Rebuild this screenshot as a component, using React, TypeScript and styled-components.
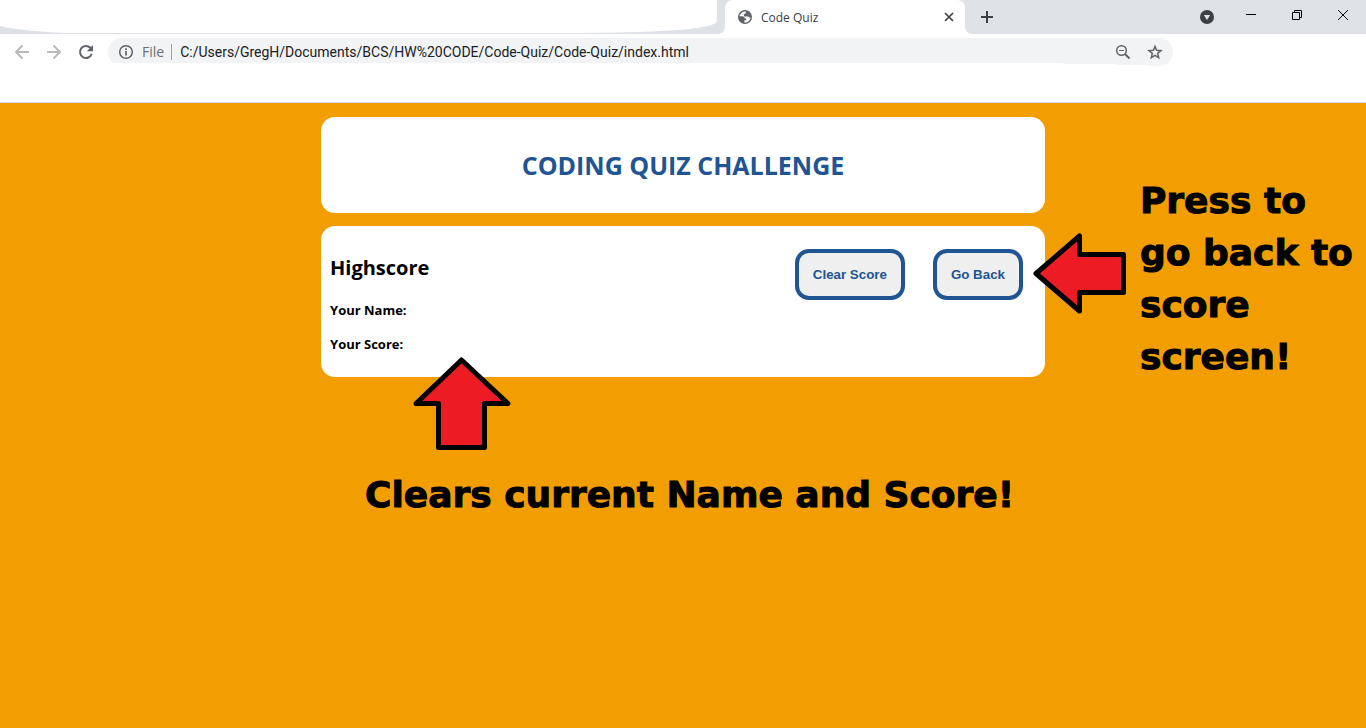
import React from "react";
import styled, { createGlobalStyle } from "styled-components";

const ui = `"Open Sans", "Noto Sans", sans-serif`;
const blue = "#205493";

const GlobalStyle = createGlobalStyle`
  *, *::before, *::after { box-sizing: border-box; }
  body { margin: 0; background: #f39e00; font-family: ${ui}; }
`;

const Page = styled.div`
  min-height: 100vh;
  display: flex;
  flex-direction: column;
  overflow-x: hidden;
`;

const Browser = styled.header`
  height: 103px;
  background: #fff;
  border-bottom: 1px solid #d9dadd;
`;

const TabStrip = styled.div`
  display: flex;
  height: 34px;
  background: #dee1e6;
`;

const BlankTabs = styled.div`
  flex: 0 1 725px;
  padding-right: 8px;
  svg { display: block; width: 100%; height: 34px; }
`;

const Tab = styled.div`
  position: relative;
  display: flex;
  align-items: center;
  width: 240px;
  height: 34px;
  padding: 0 10px 0 12px;
  background: #fff;
  border-radius: 8px 8px 0 0;
  color: #3c4043;
  font-size: 12px;
  &::before, &::after {
    content: "";
    position: absolute;
    bottom: 0;
    width: 8px;
    height: 8px;
  }
  &::before {
    right: 100%;
    background: radial-gradient(circle at 0 0, transparent 8px, #fff 8px);
  }
  &::after {
    left: 100%;
    background: radial-gradient(circle at 100% 0, transparent 8px, #fff 8px);
  }
`;

const TabTitle = styled.span`
  flex: 1;
  padding-left: 8px;
`;

const IconButton = styled.button<{ $w?: number }>`
  display: grid;
  place-items: center;
  flex: none;
  width: ${(p) => p.$w ?? 16}px;
  padding: 0;
  border: 0;
  background: none;
  svg { display: block; }
`;

const WindowControls = styled.div`
  display: flex;
  align-items: center;
  margin-left: auto;
  padding-bottom: 4px;
`;

const AccountSlot = styled.div`
  display: flex;
  padding-top: 4px;
`;

const Toolbar = styled.div`
  display: flex;
  align-items: center;
  gap: 16px;
  padding: 4px 193px 0 14px;
`;

const AddressBar = styled.div`
  flex: 1;
  display: flex;
  align-items: center;
  height: 28px;
  margin-left: -2px;
  padding: 0 10px;
  border-radius: 14px;
  background: #f1f3f4;
  clip-path: polygon(0 0, 100% 0, 100% 100%, calc(100% - 25px) 100%, calc(100% - 25px) 27px, calc(100% - 56px) 27px, calc(100% - 56px) 26px, calc(100% - 110px) 26px, calc(100% - 110px) 25px, 0 25px);
  font-size: 14px;
  color: #202124;
`;

const Scheme = styled.span`
  margin-left: 8px;
  padding-right: 7px;
  border-right: 1px solid #9aa0a6;
  line-height: 16px;
  color: #6b6f74;
`;

const Address = styled.input`
  flex: 1;
  min-width: 0;
  padding: 0 0 0 8px;
  border: 0;
  background: none;
  font: 14px Roboto, ${ui};
  color: inherit;
`;

const BarActions = styled.div`
  display: flex;
  gap: 16px;
`;

const Main = styled.main`
  position: relative;
  width: 53%;
  margin: 14px auto;
  display: flex;
  flex-direction: column;
  gap: 13px;
`;

const Card = styled.section`
  background: #fff;
  border-radius: 14px;
`;

const TitleCard = styled(Card)`
  display: grid;
  place-items: center;
  height: 96px;
`;

const Title = styled.h1`
  margin: 0;
  color: ${blue};
  font-size: 25px;
  font-weight: 700;
  line-height: 34px;
  white-space: nowrap;
`;

const ScoreCard = styled(Card)`
  position: relative;
  display: flex;
  justify-content: space-between;
  align-items: flex-start;
  padding: 23px 22px 9px 9px;
`;

const Heading = styled.h2`
  margin: 4px 0 17px;
  font-size: 20px;
  font-weight: 700;
  line-height: 30px;
`;

const ScoreLine = styled.p`
  margin: 0 0 14px;
  font-size: 13px;
  font-weight: 700;
  line-height: 20px;
`;

const Actions = styled.div`
  display: flex;
  gap: 28px;
`;

const QuizButton = styled.button`
  height: 51px;
  padding: 0 14px;
  border: 4px solid ${blue};
  border-radius: 14px;
  background: #efefef;
  color: ${blue};
  font-family: "Liberation Sans", Arial, sans-serif;
  font-weight: 700;
  white-space: nowrap;
`;

const Note = styled.p`
  position: absolute;
  margin: 0;
  font-family: "DejaVu Sans", sans-serif;
  font-size: 36px;
  font-weight: 700;
  line-height: 52px;
  color: #000;
  -webkit-text-stroke: 1px #000;
`;

const BackNote = styled(Note)`
  top: -51px;
  left: calc(100% + 95px);
  width: 225px;
`;

const ClearNote = styled(Note)`
  top: 243px;
  left: 44px;
  white-space: nowrap;
`;

const Arrow = styled.svg`
  position: absolute;
  fill: #ed1c24;
  stroke: #000;
  stroke-width: 5px;
  stroke-linejoin: round;
`;

const BackArrow = styled(Arrow)`
  top: 7px;
  left: calc(100% - 12px);
`;

const ClearArrow = styled(Arrow)`
  top: 131px;
  left: 92px;
`;

export default function App() {
  return (
    <Page>
      <GlobalStyle />
      <Browser>
        <TabStrip>
          <BlankTabs>
            <svg viewBox="0 0 717 34" preserveAspectRatio="none" aria-hidden="true">
              <path fill="#fff" d="M0 0H717V21Q716 24 708 26Q690 30 660 31Q620 33 560 33H66Q20 31 0 26Z" />
            </svg>
          </BlankTabs>
          <Tab>
            <svg width="16" height="16" viewBox="0 0 16 16" aria-hidden="true">
              <circle cx="8" cy="8" r="7" fill="#5f6368" />
              <path fill="#fff" d="M8.8 2.5C5.4 2.3 3 4.6 2.5 7.3H5.2C6.8 7.3 7.7 8.2 7.7 9.4H9.3V11.2H7.4V13.4C10.4 13.7 13.2 11.8 13.5 8.7C12.3 8.9 12.2 7.6 11 7.6H8.4C7.2 7.5 6.7 6.6 6.8 5.5C7 4.7 8 4.7 8.8 4.6Z" />
            </svg>
            <TabTitle>Code Quiz</TabTitle>
            <IconButton $w={12} aria-label="Close tab">
              <svg width="12" height="12" viewBox="0 0 12 12" stroke="#3c4043" strokeWidth="1.7">
                <path d="M2 2L10 10M10 2L2 10" />
              </svg>
            </IconButton>
          </Tab>
          <IconButton $w={44} aria-label="New tab">
            <svg width="14" height="14" viewBox="0 0 14 14" stroke="#3c4043" strokeWidth="2">
              <path d="M7 1V13M1 7H13" />
            </svg>
          </IconButton>
          <WindowControls>
            <AccountSlot>
              <IconButton $w={42} aria-label="Search tabs">
                <svg width="14" height="14" viewBox="0 0 14 14">
                  <circle cx="7" cy="7" r="7" fill="#3c4043" />
                  <path fill="#dee1e6" d="M3.8 5H10.2L7 10Z" />
                </svg>
              </IconButton>
            </AccountSlot>
            <IconButton $w={46} aria-label="Minimize">
              <svg width="10" height="10" viewBox="0 0 10 10" stroke="#000">
                <path d="M0 4.500H10" />
              </svg>
            </IconButton>
            <IconButton $w={46} aria-label="Restore">
              <svg width="10" height="10" viewBox="0 0 10 10" stroke="#000" fill="none">
                <path d="M.5 2.500H7.500V9.500H.5ZM2.500 2.500V.5H9.500V7.500H7.500" />
              </svg>
            </IconButton>
            <IconButton $w={46} aria-label="Close">
              <svg width="10" height="10" viewBox="0 0 10 10" stroke="#000" overflow="visible">
                <path d="M0 0L10 10M10 0L0 10" />
              </svg>
            </IconButton>
          </WindowControls>
        </TabStrip>
        <Toolbar>
          <IconButton aria-label="Back">
            <svg width="16" height="16" viewBox="0 0 16 16" fill="none" stroke="#bababc" strokeWidth="2">
              <path d="M15 8H2.500M8.500 1.500L2 8L8.500 14.500" />
            </svg>
          </IconButton>
          <IconButton aria-label="Forward">
            <svg width="16" height="16" viewBox="0 0 16 16" fill="none" stroke="#bababc" strokeWidth="2">
              <path d="M1 8H13.500M7.500 1.500L14 8L7.500 14.500" />
            </svg>
          </IconButton>
          <IconButton aria-label="Reload">
            <svg width="16" height="16" viewBox="0 0 16 16" fill="none">
              <path stroke="#5f6368" strokeWidth="2" d="M13.700 9.800A6 6 0 1 1 12.300 3.800L13.500 5" />
              <path fill="#5f6368" d="M15 1V7.200H8.800Z" />
            </svg>
          </IconButton>
          <AddressBar>
            <svg width="16" height="16" viewBox="0 0 16 16" fill="none" stroke="#5f6368" aria-hidden="true">
              <circle cx="8" cy="8" r="6.300" strokeWidth="1.500" />
              <path strokeWidth="1.700" d="M8 7V11.500M8 4.300V6" />
            </svg>
            <Scheme>File</Scheme>
            <Address aria-label="Address" readOnly value="C:/Users/GregH/Documents/BCS/HW%20CODE/Code-Quiz/Code-Quiz/index.html" />
            <BarActions>
              <IconButton aria-label="Zoom">
                <svg width="16" height="16" viewBox="0 0 16 16" fill="none" stroke="#5f6368" strokeWidth="1.500">
                  <circle cx="6.500" cy="6.500" r="4.800" />
                  <path d="M10 10L14.500 14.500" strokeWidth="2" />
                  <path d="M4 6.500H9" strokeWidth="1.200" />
                </svg>
              </IconButton>
              <IconButton aria-label="Bookmark this page">
                <svg width="16" height="16" viewBox="0 0 16 16" fill="none" stroke="#5f6368" strokeWidth="1.500">
                  <path d="M8 2.400L9.600 6.200L14 6.600L10.700 9.400L11.700 13.700L8 11.400L4.300 13.700L5.300 9.400L2 6.600L6.400 6.200Z" />
                </svg>
              </IconButton>
            </BarActions>
          </AddressBar>
        </Toolbar>
      </Browser>
      <Main>
        <TitleCard>
          <Title>CODING QUIZ CHALLENGE</Title>
        </TitleCard>
        <ScoreCard>
          <div>
            <Heading>Highscore</Heading>
            <ScoreLine>Your Name:</ScoreLine>
            <ScoreLine>Your Score:</ScoreLine>
          </div>
          <Actions>
            <QuizButton>Clear Score</QuizButton>
            <QuizButton>Go Back</QuizButton>
          </Actions>
          <BackArrow width="94" height="82" viewBox="0 0 94 82" aria-hidden="true">
            <path d="M3 40.500L46.500 3V21.500H90.500V59.500H46.500V78Z" />
          </BackArrow>
          <BackNote>Press to go back to score screen!</BackNote>
          <ClearArrow width="98" height="94" viewBox="0 0 98 94" aria-hidden="true">
            <path d="M48.500 3L95 46.500H71.500V90.500H25.500V46.500H3Z" />
          </ClearArrow>
          <ClearNote>Clears current Name and Score!</ClearNote>
        </ScoreCard>
      </Main>
    </Page>
  );
}
